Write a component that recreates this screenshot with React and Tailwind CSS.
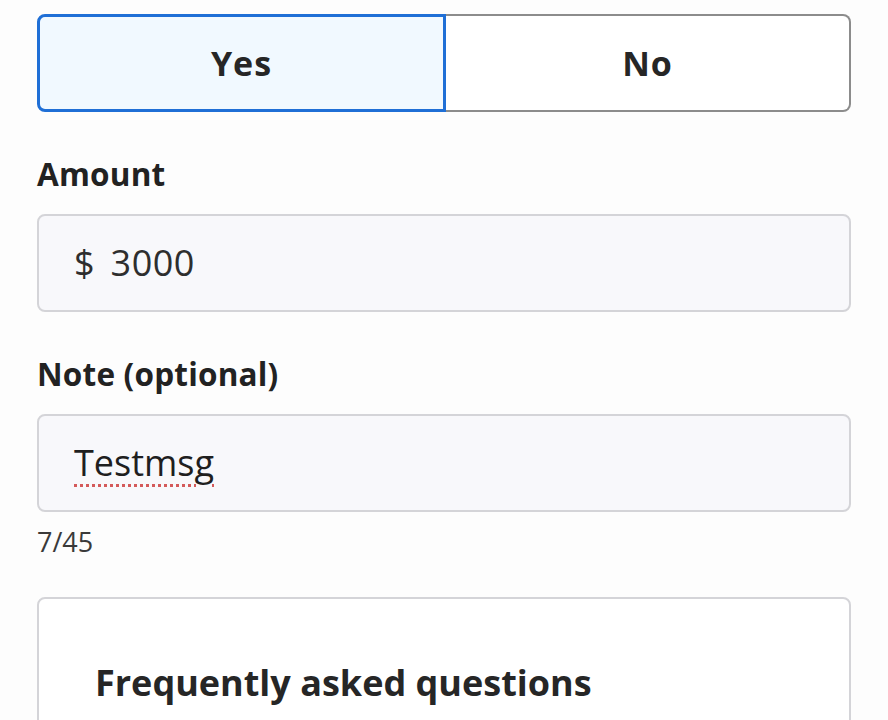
import { useState } from "react";

const App = () => {
  const [choice, setChoice] = useState("yes");

  return (
    <div
      className="min-h-[720px] bg-[#fdfdfd] px-[37px] pt-[14px] text-[#2b2b2b] overflow-hidden"
      style={{ fontFamily: '"Open Sans", "Noto Sans", sans-serif' }}
    >
      <div className="flex h-[98px]">
        <button
          onClick={() => setChoice("yes")}
          className={
            choice === "yes"
              ? "flex-1 rounded-l-[8px] border-[3px] border-[#1f6fd6] bg-[#f1f9ff] text-[34px] font-bold tracking-[1px] text-[#262626]"
              : "flex-1 rounded-l-[8px] border-2 border-[#8c8c8c] bg-white text-[34px] font-bold tracking-[1px] text-[#262626]"
          }
        >
          Yes
        </button>
        <button
          onClick={() => setChoice("no")}
          className={
            choice === "no"
              ? "flex-1 rounded-r-[8px] border-[3px] border-[#1f6fd6] bg-[#f1f9ff] text-[34px] font-bold tracking-[1px] text-[#262626]"
              : "flex-1 rounded-r-[8px] border-2 border-l-0 border-[#8c8c8c] bg-white text-[34px] font-bold tracking-[1px] text-[#262626]"
          }
        >
          No
        </button>
      </div>

      <div className="mt-[40px] mb-[18px] text-[31.5px] font-bold leading-[44px] tracking-[0.2px] text-[#222]">Amount</div>
      <div className="flex h-[98px] items-center rounded-[8px] border-2 border-[#d4d4d8] bg-[#f8f8fb] px-[35px] text-[36px] text-[#2e2e2e]">
        <span>$</span>
        <span className="ml-[16px] tracking-[0.5px]">3000</span>
      </div>

      <div className="mt-[40px] mb-[18px] text-[31.5px] font-bold leading-[44px] tracking-[0.2px] text-[#222]">Note (optional)</div>
      <div className="flex h-[98px] items-center rounded-[8px] border-2 border-[#d4d4d8] bg-[#f8f8fb] px-[35px] text-[36px] text-[#1f1f1f]">
        <span className="underline decoration-dotted decoration-[#d45a5a] decoration-[3px] underline-offset-[8px]">
          Testmsg
        </span>
      </div>
      <div className="mt-[12px] text-[27px] leading-[36px] text-[#3a3a3a]">7/45</div>

      <div className="mt-[37px] h-[200px] rounded-[8px] border-2 border-[#d4d4d8] bg-white px-[56px] pt-[60px]">
        <div className="text-[36px] font-bold leading-[48px] text-[#262626]">Frequently asked questions</div>
      </div>
    </div>
  );
};

export default App;
